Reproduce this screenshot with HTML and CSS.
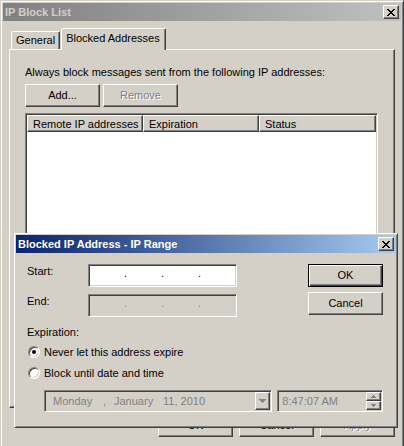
FILE: index.html
```html
<!DOCTYPE html>
<html lang="en">
<head>
  <meta charset="UTF-8" />
  <title>IP Block List</title>
  <link rel="stylesheet" href="styles.css">
</head>
<body>
  <div class="window">
    <div class="titlebar inactive">
      <span class="title">IP Block List</span>
      <button class="close" aria-label="Close">
        <svg width="8" height="7" viewBox="0 0 8 7" shape-rendering="crispEdges"><path d="M0 0h2v1h-2z M6 0h2v1h-2z M1 1h2v1h-2z M5 1h2v1h-2z M2 2h4v1h-4z M3 3h2v1h-2z M2 4h4v1h-4z M1 5h2v1h-2z M5 5h2v1h-2z M0 6h2v1h-2z M6 6h2v1h-2z" fill="#000"/></svg>
      </button>
    </div>

    <div class="tabs">
      <div class="tab">General</div>
      <div class="tab selected">Blocked Addresses</div>
    </div>
    <div class="panel">
      <p class="note">Always block messages sent from the following IP addresses:</p>
      <div class="btn-row">
        <button class="btn">Add...</button>
        <button class="btn" disabled>Remove</button>
      </div>
      <div class="listview">
        <div class="lv-head">
          <div class="lv-col">Remote IP addresses</div>
          <div class="lv-col">Expiration</div>
          <div class="lv-col last">Status</div>
        </div>
      </div>
    </div>
    <div class="footer">
      <button class="btn">OK</button>
      <button class="btn">Cancel</button>
      <button class="btn" disabled>Apply</button>
    </div>
  </div>

  <div class="dialog">
    <div class="titlebar active">
      <span class="title">Blocked IP Address - IP Range</span>
      <button class="close" aria-label="Close">
        <svg width="8" height="7" viewBox="0 0 8 7" shape-rendering="crispEdges"><path d="M0 0h2v1h-2z M6 0h2v1h-2z M1 1h2v1h-2z M5 1h2v1h-2z M2 2h4v1h-4z M3 3h2v1h-2z M2 4h4v1h-4z M1 5h2v1h-2z M5 5h2v1h-2z M0 6h2v1h-2z M6 6h2v1h-2z" fill="#000"/></svg>
      </button>
    </div>

    <div class="dlg-body">
      <div class="dlg-top">
        <div class="fields">
          <div class="field-row">
            <span class="field-label">Start:</span>
            <div class="ipbox">
              <span class="seg"></span><span class="dot">.</span>
              <span class="seg"></span><span class="dot">.</span>
              <span class="seg"></span><span class="dot">.</span>
              <span class="seg"></span>
            </div>
          </div>
          <div class="field-row">
            <span class="field-label">End:</span>
            <div class="ipbox disabled">
              <span class="seg"></span><span class="dot">.</span>
              <span class="seg"></span><span class="dot">.</span>
              <span class="seg"></span><span class="dot">.</span>
              <span class="seg"></span>
            </div>
          </div>
        </div>
        <div class="dlg-buttons">
          <button class="btn default">OK</button>
          <button class="btn">Cancel</button>
        </div>
      </div>

      <div class="group-label">Expiration:</div>
      <div class="radio"><span class="radio-dot checked"></span>Never let this address expire</div>
      <div class="radio second"><span class="radio-dot"></span>Block until date and time</div>

      <div class="dt-row">
        <div class="picker date">
          <span class="f-day">Monday</span><span class="f-comma">,</span><span class="f-month">January</span><span>11, 2010</span>
          <span class="dd-btn">
            <svg width="7" height="4" viewBox="0 0 7 4" shape-rendering="crispEdges"><path d="M0 0h7v1h-7z M1 1h5v1h-5z M2 2h3v1h-3z M3 3h1v1h-1z" fill="#808080"/></svg>
          </span>
        </div>
        <div class="picker time">
          <span>8:47:07 AM</span>
          <span class="spin">
            <span class="spin-btn">
              <svg width="5" height="3" viewBox="0 0 5 3" shape-rendering="crispEdges"><path d="M2 0h1v1h-1z M1 1h3v1h-3z M0 2h5v1h-5z" fill="#808080"/></svg>
            </span>
            <span class="spin-btn">
              <svg width="5" height="3" viewBox="0 0 5 3" shape-rendering="crispEdges"><path d="M0 0h5v1h-5z M1 1h3v1h-3z M2 2h1v1h-1z" fill="#808080"/></svg>
            </span>
          </span>
        </div>
      </div>
    </div>
  </div>
</body>
</html>
```

FILE: styles.css
```css
* {
  box-sizing: border-box;
  margin: 0;
  padding: 0;
}

html, body {
  overflow: hidden;
}

body {
  font-family: Tahoma, 'Liberation Sans', Arial, sans-serif;
  font-size: 11px;
  line-height: 13px;
  color: #000;
  background: #d4d0c8;
  width: 404px;
  height: 446px;
}

button {
  font: inherit;
  color: inherit;
}

/* outer property window, its bottom edge lies below the frame */
.window {
  width: 404px;
  height: 446px;
  border: 1px solid;
  border-bottom: none;
  border-color: #d4d0c8 #404040 #404040 #d4d0c8;
  box-shadow: inset 1px 1px #fff, inset -1px 0 #808080;
  padding: 2px 2px 0;
}

.titlebar {
  height: 18px;
  display: flex;
  align-items: center;
  justify-content: space-between;
  padding: 0 2px;
}

.titlebar.inactive {
  background: linear-gradient(to right, #808080, #c0c0c0);
  color: #d4d0c8;
}

.titlebar.active {
  background: linear-gradient(to right, #0a246a, #a6caf0);
  color: #fff;
}

.title {
  font-weight: bold;
}

.close {
  width: 16px;
  height: 14px;
  display: flex;
  align-items: center;
  justify-content: center;
  background: #d4d0c8;
  border: 1px solid;
  border-color: #fff #404040 #404040 #fff;
  box-shadow: inset -1px -1px #808080;
}

/* tabs */
.tabs {
  display: flex;
  align-items: flex-end;
  height: 21px;
  margin: 7px 6px 0;
  padding-left: 2px;
}

.tab {
  height: 18px;
  padding: 2px 4px 0 4px;
  border: 1px solid;
  border-bottom: none;
  border-color: #fff #404040 transparent #fff;
  border-radius: 2px 2px 0 0;
  box-shadow: inset -1px 0 #808080;
  white-space: nowrap;
}

.tab.selected {
  position: relative;
  z-index: 1;
  height: 22px;
  margin-left: 1px;
  margin-bottom: -1px;
  padding: 3px 5px 0 4px;
  background: #d4d0c8;
}

.panel {
  height: 359px;
  margin: 0 6px;
  border: 1px solid;
  border-color: #fff #404040 #404040 #fff;
  box-shadow: inset -1px -1px #808080;
  padding: 16px 15px 0;
}

.btn-row {
  display: flex;
  gap: 3px;
  margin-top: 5px;
}

.btn {
  width: 75px;
  height: 23px;
  background: #d4d0c8;
  border: 1px solid;
  border-color: #fff #404040 #404040 #fff;
  box-shadow: inset -1px -1px #808080;
  text-align: center;
}

.btn:disabled {
  color: #808080;
  text-shadow: 1px 1px #fff;
}

.btn.default {
  border-color: #000;
  box-shadow: inset 1px 1px #fff, inset -1px -1px #404040, inset -2px -2px #808080;
}

.listview {
  width: 353px;
  height: 290px;
  margin-top: 6px;
  background: #fff;
  border: 1px solid;
  border-color: #808080 #fff #fff #808080;
  box-shadow: inset 1px 1px #404040, inset -1px -1px #d4d0c8;
  padding: 1px;
}

.lv-head {
  display: flex;
  height: 17px;
}

.lv-col {
  width: 116px;
  padding: 2px 0 0 5px;
  background: #d4d0c8;
  border: 1px solid;
  border-color: #fff #404040 #404040 #fff;
  box-shadow: inset -1px -1px #808080;
}

.lv-col.last {
  width: 117px;
}

.footer {
  display: flex;
  justify-content: flex-end;
  gap: 6px;
  margin: 6px 6px 0;
}

/* modal dialog on top */
.dialog {
  position: absolute;
  left: 14px;
  top: 233px;
  width: 384px;
  height: 195px;
  background: #d4d0c8;
  border: 1px solid;
  border-color: #fff #404040 #404040 #fff;
  box-shadow: inset 1px 1px #d4d0c8, inset -1px -1px #808080;
  padding: 1px;
}

.dlg-body {
  padding: 11px 13px 0 11px;
}

.dlg-top {
  display: flex;
  justify-content: space-between;
}

.fields {
  display: flex;
  flex-direction: column;
  gap: 7px;
}

.field-row {
  display: flex;
  align-items: flex-start;
}

.field-label {
  width: 61px;
  padding-top: 1px;
}

.ipbox {
  width: 149px;
  height: 23px;
  display: flex;
  align-items: center;
  background: #fff;
  border: 1px solid;
  border-color: #808080 #fff #fff #808080;
  box-shadow: inset 1px 1px #404040, inset -1px -1px #d4d0c8;
  padding: 0 1px;
}

.ipbox.disabled {
  background: #d4d0c8;
  color: #808080;
}

.seg {
  flex: 1;
}

.dot {
  width: 3px;
  margin-bottom: 5px;
}

.dlg-buttons {
  display: flex;
  flex-direction: column;
  gap: 5px;
}

.group-label {
  margin-top: 9px;
}

.radio {
  display: flex;
  align-items: center;
  gap: 4px;
  height: 14px;
  margin-top: 6px;
  padding-left: 1px;
}

.radio.second {
  margin-top: 7px;
}

.radio-dot {
  width: 12px;
  height: 12px;
  display: flex;
  align-items: center;
  justify-content: center;
  border-radius: 50%;
  background: #fff;
  border: 1px solid;
  border-color: #808080 #fff #fff #808080;
  box-shadow: inset 1px 1px #404040, inset -1px -1px #d4d0c8;
}

.radio-dot.checked::after {
  content: "";
  width: 4px;
  height: 4px;
  border-radius: 50%;
  background: #000;
}

.dt-row {
  display: flex;
  gap: 5px;
  margin: 10px 0 0 17px;
}

.picker {
  height: 22px;
  display: flex;
  align-items: center;
  color: #808080;
  border: 1px solid;
  border-color: #808080 #fff #fff #808080;
  box-shadow: inset 1px 1px #404040, inset -1px -1px #d4d0c8;
  padding: 1px;
}

.picker.date {
  width: 229px;
  padding-left: 8px;
}

.picker.time {
  width: 106px;
  padding-left: 4px;
}

.f-day {
  width: 50px;
}

.f-comma {
  width: 11px;
}

.f-month {
  width: 49px;
}

.dd-btn {
  margin-left: auto;
  width: 15px;
  height: 18px;
  display: flex;
  align-items: center;
  justify-content: center;
  border: 1px solid;
  border-color: #fff #404040 #404040 #fff;
  box-shadow: inset -1px -1px #808080;
}

.spin {
  margin-left: auto;
  display: flex;
  flex-direction: column;
}

.spin-btn {
  width: 15px;
  height: 9px;
  display: flex;
  align-items: center;
  justify-content: center;
  border: 1px solid;
  border-color: #fff #404040 #404040 #fff;
  box-shadow: inset -1px -1px #808080;
}
```
